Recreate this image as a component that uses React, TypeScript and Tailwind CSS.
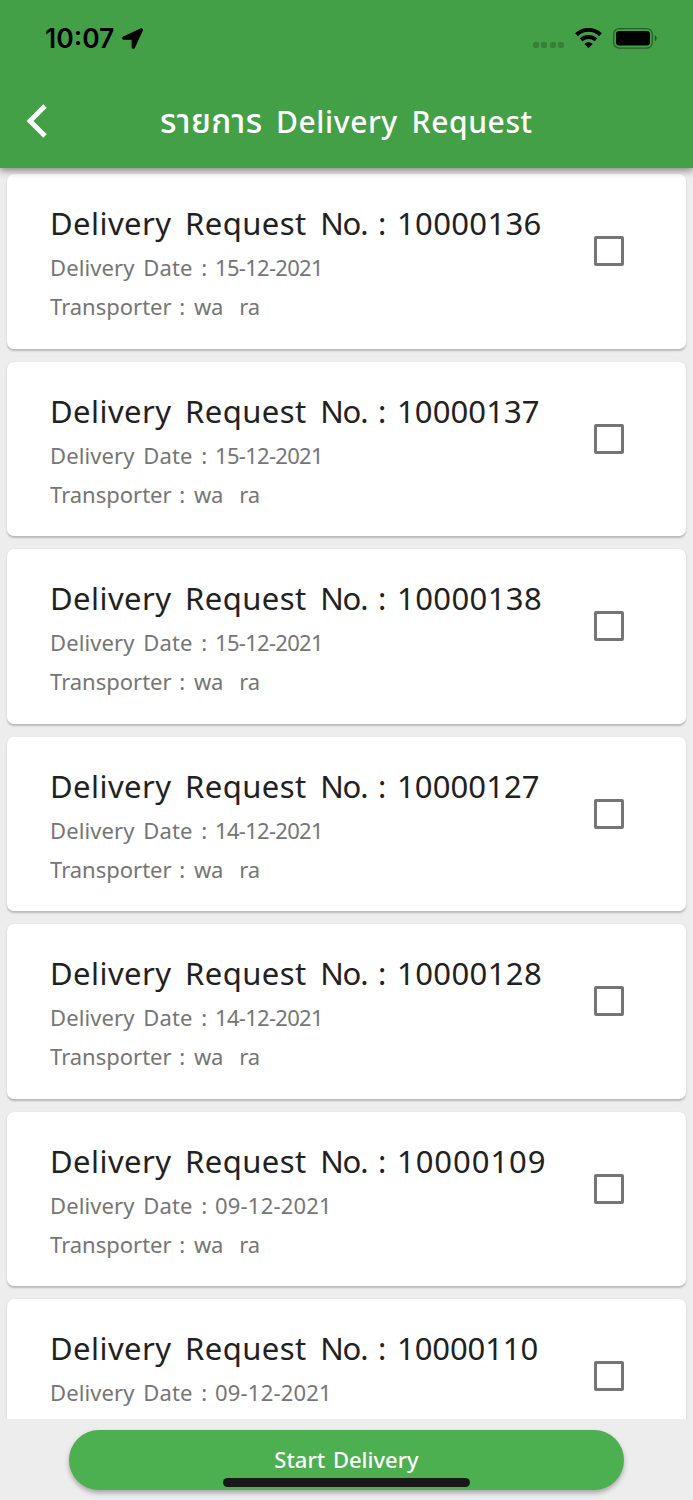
const requests = [
  { no: '10000136', date: '15-12-2021', transporter: 'wa  ra', noClass: 'tracking-[0.35px]', dateClass: 'tracking-[-0.7px]' },
  { no: '10000137', date: '15-12-2021', transporter: 'wa  ra', noClass: 'tracking-[0.1px]', dateClass: 'tracking-[-0.7px]' },
  { no: '10000138', date: '15-12-2021', transporter: 'wa  ra', noClass: 'tracking-[0.4px]', dateClass: 'tracking-[-0.7px]' },
  { no: '10000127', date: '14-12-2021', transporter: 'wa  ra', noClass: 'tracking-[0.1px]', dateClass: 'tracking-[-0.7px]' },
  { no: '10000128', date: '14-12-2021', transporter: 'wa  ra', noClass: 'tracking-[0.4px]', dateClass: 'tracking-[-0.7px]' },
  { no: '10000109', date: '09-12-2021', transporter: 'wa  ra', noClass: 'tracking-[0.95px]', dateClass: 'tracking-[0.2px]' },
  { no: '10000110', date: '09-12-2021', transporter: '', noClass: 'tracking-[-0.1px]', dateClass: 'tracking-[0.2px]' },
]

type Request = (typeof requests)[number]

function StatusBar() {
  return (
    <div className="flex h-[76px] items-center pl-[45px] pr-[36px]">
      <span className="w-[69px] whitespace-nowrap font-['Inter',sans-serif] text-[26.5px] font-semibold leading-none text-black">
        10:07
      </span>
      <svg className="ml-[8px] h-[21px] w-[21px]" viewBox="0 0 21 21" stroke="#000" strokeWidth="1.2" strokeLinejoin="round">
        <path d="M18.700 1 1.500 9C.4 9.500.6 11.200 1.900 11.200h7.700c.4 0 .6.2.6.6v7.300c0 1.400 1.700 1.600 2.200.4L20.200 2.400C20.600 1.400 19.800.5 18.700 1Z" />
      </svg>
      <div className="ml-auto flex items-center">
        <div className="mt-[13px] flex gap-[2.500px]">
          <i className="size-[6px] rounded-[2px] bg-black/20" />
          <i className="size-[6px] rounded-[2px] bg-black/20" />
          <i className="size-[6px] rounded-[2px] bg-black/20" />
          <i className="size-[6px] rounded-[2px] bg-black/20" />
        </div>
        <svg className="ml-[11px] h-[20px] w-[27px]" viewBox="0 0 27 20" fill="none" stroke="#000">
          <path d="M1.500 6.700C8.300.2 18.700.2 25.500 6.700" strokeWidth="4" />
          <path d="M6 11.800c4.300-3.900 10.700-3.900 15 0" strokeWidth="4" />
          <path d="M9.300 16c2.400-2.200 6-2.200 8.400 0l-3.800 3.700q-.4.3-.8 0Z" fill="#000" stroke="none" />
        </svg>
        <svg className="ml-[11px] h-[21px] w-[44px]" viewBox="0 0 44 21">
          <rect x=".7" y=".7" width="38.600" height="19.400" rx="5.500" fill="none" stroke="#000" strokeOpacity=".4" strokeWidth="1.300" />
          <rect x="3" y="3" width="34" height="14.500" rx="3.200" />
          <path d="M41.700 7q2 .8 2 3.200t-2 3.200Z" fillOpacity=".45" />
        </svg>
      </div>
    </div>
  )
}

function Header() {
  return (
    <header className="relative z-10 h-[167.5px] shrink-0 bg-[#43a047] shadow-[0_3px_7px_rgba(0,0,0,0.42)]">
      <StatusBar />
      <div className="flex h-[91px] items-center">
        <svg className="mb-[2px] ml-[26px] h-[34px] w-[22px]" viewBox="0 0 22 34" fill="none" stroke="#fff" strokeWidth="4.800">
          <path d="M19 2 4 17 19 32" />
        </svg>
        <h1 className="ml-[112px] flex items-baseline whitespace-nowrap text-[30px] font-medium leading-[44px] text-white">
          <span className="w-[116px] text-[33px] tracking-[0.4px]">รายการ</span>
          <span className="tracking-[0.6px] [word-spacing:5.5px]">Delivery Request</span>
        </h1>
      </div>
    </header>
  )
}

function RequestCard({ request }: { request: Request }) {
  return (
    <div className="flex h-[174.5px] shrink-0 items-start justify-between rounded-[7px] bg-white pl-[43px] pr-[62px] pt-[27px] shadow-[0_1.5px_2px_rgba(0,0,0,0.22)]">
      <div className="whitespace-pre">
        <div className="flex text-[31px] leading-[44px] text-[#212121]">
          <span className="w-[328px] tracking-[0.45px] [word-spacing:5px]">
            Delivery Request <span className="tracking-[-1.2px]">No.</span>
          </span>
          <span className="w-[19px]">:</span>
          <span className={request.noClass}>{request.no}</span>
        </div>
        <div className="mt-[3px] flex text-[22px] leading-[39px] text-[#757575]">
          <span className="w-[165px] tracking-[0.1px] [word-spacing:3px]">Delivery Date :</span>
          <span className={request.dateClass}>{request.date}</span>
        </div>
        {request.transporter && (
          <div className="flex text-[22px] leading-[39px] text-[#757575]">
            <span className="w-[144px] [word-spacing:2px]">Transporter :</span>
            <span className="tracking-[-0.2px] [word-spacing:2.5px]">{request.transporter}</span>
          </div>
        )}
      </div>
      <div className="mt-[35px] size-[30px] rounded-[2px] border-[3px] border-[#757575]" />
    </div>
  )
}

export default function App() {
  return (
    <div className="relative flex h-[1500px] w-[693px] flex-col overflow-hidden bg-[#ededed] font-['Noto_Sans','Noto_Sans_Thai',sans-serif]">
      <Header />
      <main className="flex h-[1251.5px] shrink-0 flex-col gap-[13px] overflow-hidden px-[7px] pt-[6.500px]">
        {requests.map((request) => (
          <RequestCard key={request.no} request={request} />
        ))}
      </main>
      <footer className="px-[69px] pt-[10.5px]">
        <button className="flex h-[60.500px] w-[555px] items-center justify-center rounded-full bg-[#4caf50] text-[22px] font-medium text-white shadow-[0_3px_5px_rgba(0,0,0,0.3)] [word-spacing:2px]">
          Start Delivery
        </button>
      </footer>
      {/* Home indicator */}
      <div className="absolute bottom-[13.5px] left-[223px] h-[8.500px] w-[247px] rounded-full bg-[#181818]" />
    </div>
  )
}
